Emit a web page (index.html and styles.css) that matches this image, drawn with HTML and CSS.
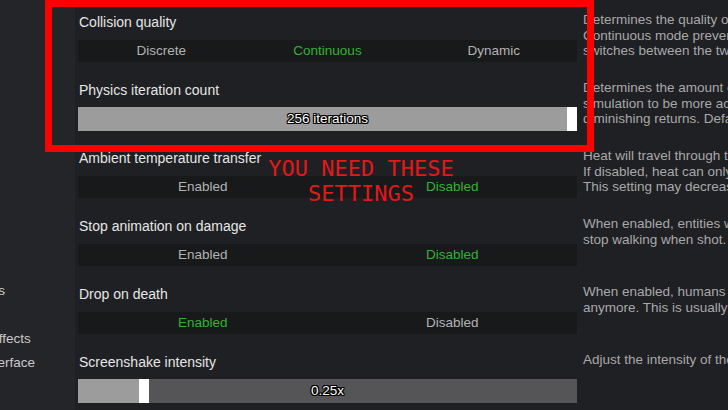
FILE: index.html
```html
<!DOCTYPE html>
<html>
<head>
<meta charset="utf-8">
<link rel="stylesheet" href="styles.css">
</head>
<body>
<div class="app">
  <nav class="sidebar">
    <div class="nav-item">Graphics</div>
    <div class="nav-item">Audio</div>
    <div class="nav-item">Visual effects</div>
    <div class="nav-item">User interface</div>
  </nav>
  <main class="settings">
    <section class="setting">
      <div class="control">
        <div class="label">Collision quality</div>
        <div class="choice three"><span>Discrete</span><span class="on">Continuous</span><span>Dynamic</span></div>
      </div>
      <p class="desc">Determines the quality of collision detection.<br>Continuous mode prevents fast objects from tunnelling.<br>switches between the two automatically.</p>
    </section>
    <section class="setting">
      <div class="control">
        <div class="label">Physics iteration count</div>
        <div class="slider"><div class="fill" style="width:489px"></div><div class="thumb"></div><span class="value">256 iterations</span></div>
      </div>
      <p class="desc">Determines the amount of physics iterations per step.<br>simulation to be more accurate at higher values, with<br>diminishing returns. Default is 256.</p>
    </section>
    <section class="setting">
      <div class="control">
        <div class="label">Ambient temperature transfer</div>
        <div class="choice two"><span>Enabled</span><span class="on">Disabled</span></div>
      </div>
      <p class="desc">Heat will travel through the air to nearby objects.<br>If disabled, heat can only spread through contact.<br>This setting may decrease performance.</p>
    </section>
    <section class="setting">
      <div class="control">
        <div class="label">Stop animation on damage</div>
        <div class="choice two"><span>Enabled</span><span class="on">Disabled</span></div>
      </div>
      <p class="desc">When enabled, entities will briefly freeze and<br>stop walking when shot.</p>
    </section>
    <section class="setting">
      <div class="control">
        <div class="label">Drop on death</div>
        <div class="choice two"><span class="on">Enabled</span><span>Disabled</span></div>
      </div>
      <p class="desc">When enabled, humans will drop what they hold<br>anymore. This is usually what you want.</p>
    </section>
    <section class="setting">
      <div class="control">
        <div class="label">Screenshake intensity</div>
        <div class="slider"><div class="fill" style="width:61px"></div><div class="thumb"></div><span class="value">0.25x</span></div>
      </div>
      <p class="desc">Adjust the intensity of the screenshake.</p>
    </section>
  </main>
</div>
<div class="highlight"></div>
<div class="callout">YOU NEED THESE<br>SETTINGS</div>
</body>
</html>
```
FILE: styles.css
```css
html, body {
  margin: 0;
  padding: 0;
  width: 728px;
  height: 410px;
  overflow: hidden;
  background: #1f2023;
  font-family: "Liberation Sans", Arial, sans-serif;
}

.app {
  display: flex;
  height: 410px;
}

.sidebar {
  width: 75px;
  flex-shrink: 0;
  background: #242529;
  padding-top: 279px;
  box-sizing: border-box;
  overflow: hidden;
}

.nav-item {
  margin-left: -49px;
  line-height: 24px;
  font-size: 13.5px;
  color: #c9c9c9;
  white-space: nowrap;
}

.settings {
  flex: 1;
  padding: 13px 0 0 3px;
  background: #1f2023;
  overflow: hidden;
}

.setting {
  display: flex;
  height: 68px;
}

.control {
  width: 499px;
  flex-shrink: 0;
}

.label {
  font-size: 14px;
  line-height: 18px;
  padding-left: 1px;
  margin-bottom: 9px;
  color: #e6e6e6;
  white-space: nowrap;
}

.choice {
  display: grid;
  height: 22px;
  background: #18191b;
  font-size: 13.5px;
  line-height: 22px;
  text-align: center;
  color: #b3b3b3;
}

.choice.three { grid-template-columns: repeat(3, 1fr); }
.choice.two { grid-template-columns: repeat(2, 1fr); }

.choice .on { color: #33b333; }

.slider {
  position: relative;
  display: flex;
  height: 24px;
  margin-top: -1px;
  background: #555557;
}

.fill { background: #9c9c9c; }

.thumb {
  width: 10px;
  background: #ffffff;
}

.value {
  position: absolute;
  left: 0;
  right: 0;
  top: 0;
  line-height: 24px;
  text-align: center;
  font-size: 13.5px;
  color: #ffffff;
  text-shadow: -1px 0 0 #000, 1px 0 0 #000, 0 -1px 0 #000, 0 1px 0 #000,
    -1px -1px 0 #000, 1px 1px 0 #000, -1px 1px 0 #000, 1px -1px 0 #000;
}

.desc {
  margin: -1px 0 0 6px;
  font-size: 13.5px;
  line-height: 15.5px;
  color: #a9a9a9;
  white-space: nowrap;
}

.highlight {
  position: absolute;
  left: 45px;
  top: 0;
  width: 549px;
  height: 152px;
  box-sizing: border-box;
  border: 7px solid #ff0000;
}

.callout {
  position: absolute;
  left: 261px;
  top: 156px;
  width: 200px;
  text-align: center;
  font-family: "DejaVu Sans Mono", monospace;
  font-size: 22px;
  line-height: 25px;
  color: #e41818;
  white-space: nowrap;
}
```
